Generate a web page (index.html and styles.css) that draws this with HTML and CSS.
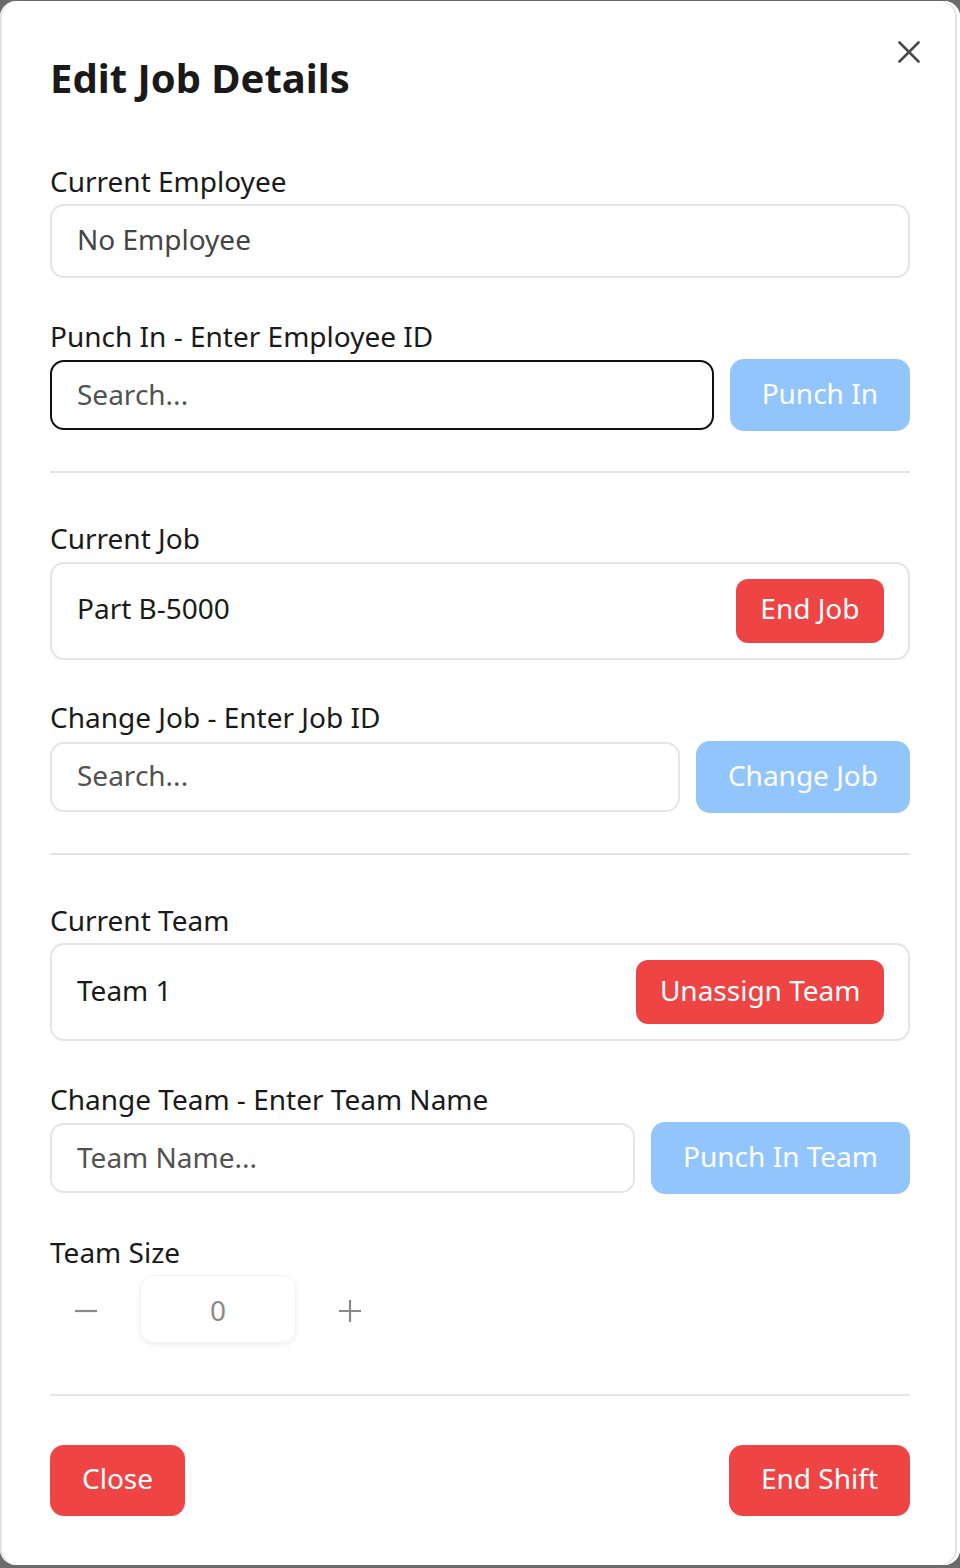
FILE: index.html
```html
<!DOCTYPE html>
<html lang="en">
<head>
<meta charset="utf-8">
<title>Edit Job Details</title>
<link rel="stylesheet" href="styles.css">
</head>
<body>
<div class="dialog">
  <button class="close" aria-label="Close">
    <svg width="22" height="22" viewBox="0 0 22 22"><path d="M1.5 1.5 L20.5 20.5 M20.5 1.5 L1.5 20.5" stroke="#4a4a4a" stroke-width="2.6" stroke-linecap="round" fill="none"/></svg>
  </button>
  <h2 class="title">Edit Job Details</h2>

  <div class="field">
    <label class="label">Current Employee</label>
    <div class="display">No Employee</div>
  </div>

  <div class="field gap">
    <label class="label">Punch In - Enter Employee ID</label>
    <div class="row">
      <input class="input focused" type="text" placeholder="Search...">
      <button class="btn btn-lg btn-blue">Punch In</button>
    </div>
  </div>

  <div class="divider"></div>

  <div class="field">
    <label class="label">Current Job</label>
    <div class="box">
      <span class="box-text">Part B-5000</span>
      <button class="btn btn-sm btn-red">End Job</button>
    </div>
  </div>

  <div class="field gap">
    <label class="label">Change Job - Enter Job ID</label>
    <div class="row">
      <input class="input" type="text" placeholder="Search...">
      <button class="btn btn-lg btn-blue">Change Job</button>
    </div>
  </div>

  <div class="divider"></div>

  <div class="field">
    <label class="label">Current Team</label>
    <div class="box">
      <span class="box-text">Team 1</span>
      <button class="btn btn-sm btn-red btn-wide">Unassign Team</button>
    </div>
  </div>

  <div class="field gap">
    <label class="label">Change Team - Enter Team Name</label>
    <div class="row">
      <input class="input" type="text" placeholder="Team Name...">
      <button class="btn btn-lg btn-blue">Punch In Team</button>
    </div>
  </div>

  <div class="field gap">
    <label class="label">Team Size</label>
    <div class="stepper">
      <button class="step-btn" aria-label="Decrease">
        <svg width="24" height="24" viewBox="0 0 24 24"><path d="M1 12 H23" stroke="#8a8a8a" stroke-width="2.2" fill="none"/></svg>
      </button>
      <div class="step-val">0</div>
      <button class="step-btn" aria-label="Increase">
        <svg width="24" height="24" viewBox="0 0 24 24"><path d="M1 12 H23 M12 1 V23" stroke="#8a8a8a" stroke-width="2.2" fill="none"/></svg>
      </button>
    </div>
  </div>

  <div class="divider footer-divider"></div>

  <div class="footer">
    <button class="btn btn-lg btn-red">Close</button>
    <button class="btn btn-lg btn-red">End Shift</button>
  </div>
</div>
</body>
</html>
```

FILE: styles.css
```css
html, body {
  margin: 0;
  padding: 0;
  background: #6b6b6b;
}

body {
  font-family: "Noto Sans", "Open Sans", sans-serif;
  color: #1a1a1a;
}

.dialog {
  position: relative;
  margin: 1px 0 2px 0;
  background: #ffffff;
  border-radius: 16px;
  padding: 49px 50px 49.5px 50px;
  box-shadow: inset 2px 0 0 #e4e4e4, inset -3px 0 0 #ffffff, inset -5px 0 0 #e4e4e4;
}

.close {
  position: absolute;
  top: 40px;
  right: 40px;
  width: 22px;
  height: 22px;
  padding: 0;
  border: none;
  background: none;
  display: flex;
}

.title {
  margin: 0 0 54.5px 0;
  font-size: 40px;
  line-height: 56px;
  font-weight: 700;
  color: #1a1a1a;
}

.field.gap {
  margin-top: 37.5px;
}

.label {
  display: block;
  font-size: 28px;
  line-height: 40px;
  margin-bottom: 3.5px;
  color: #1a1a1a;
}

.display {
  box-sizing: border-box;
  height: 74px;
  border: 2px solid #e5e5e5;
  border-radius: 14px;
  padding: 0 25px 4px 25px;
  display: flex;
  align-items: center;
  font-size: 28px;
  color: #454545;
}

.row {
  display: flex;
  align-items: center;
  gap: 16px;
}

.input {
  flex: 1;
  min-width: 0;
  box-sizing: border-box;
  height: 70px;
  border: 2px solid #e5e5e5;
  border-radius: 14px;
  padding: 0 25px 3px 25px;
  font-family: "Noto Sans", "Open Sans", sans-serif;
  font-size: 28px;
  color: #1a1a1a;
  background: #fff;
  outline: none;
}

.input::placeholder {
  color: #525252;
  opacity: 1;
}

.input.focused {
  border-color: #111111;
}

.btn {
  box-sizing: border-box;
  border: none;
  color: #ffffff;
  font-family: "Noto Sans", "Open Sans", sans-serif;
  font-size: 28px;
  white-space: nowrap;
  cursor: pointer;
}

.btn-lg {
  height: 72px;
  padding: 0 32px 4px 32px;
  border-radius: 14px;
}

.btn-sm {
  height: 64px;
  padding: 0 24.5px 5px 24.5px;
  border-radius: 12px;
}

.btn-wide {
  padding-left: 23.5px;
  padding-right: 23.5px;
}

.btn-blue {
  background: #93c5fd;
}

.btn-red {
  background: #ef4444;
}

.divider {
  height: 2px;
  background: #e5e5e5;
  margin: 40px 0 45px 0;
}

.footer-divider {
  margin: 50.5px 0 49px 0;
}

.box {
  box-sizing: border-box;
  height: 98px;
  border: 2px solid #e5e5e5;
  border-radius: 14px;
  padding: 0 24px 0 25px;
  display: flex;
  align-items: center;
  justify-content: space-between;
}

.box-text {
  display: block;
  padding-bottom: 5px;
  font-size: 28px;
  color: #1a1a1a;
}

.stepper {
  display: flex;
  align-items: center;
  gap: 18px;
}

.step-btn {
  width: 72px;
  height: 68px;
  padding: 3px 0 0 0;
  border: none;
  background: none;
  display: flex;
  align-items: center;
  justify-content: center;
}

.step-val {
  box-sizing: border-box;
  width: 156px;
  height: 68px;
  border: 1px solid #f3f3f3;
  border-radius: 14px;
  box-shadow: 0 2px 5px rgba(0, 0, 0, 0.07);
  display: flex;
  align-items: center;
  justify-content: center;
  padding-top: 2px;
  font-size: 28px;
  color: #8a8a8a;
}

.footer {
  display: flex;
  justify-content: space-between;
  align-items: center;
}

.footer .btn-lg {
  height: 71px;
}
```
